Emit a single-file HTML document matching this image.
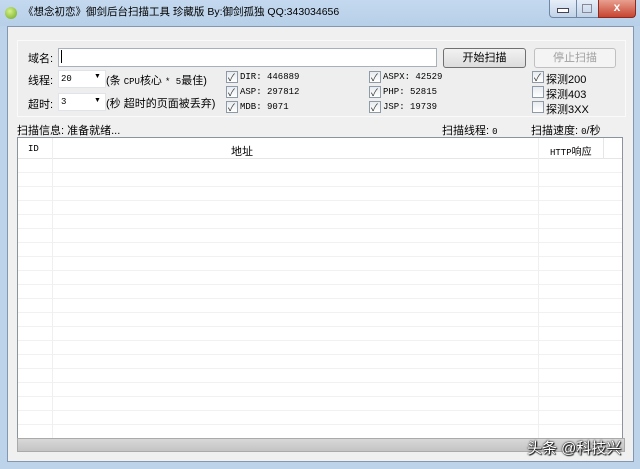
<html><head><style>
body{margin:0;width:640px;height:469px;overflow:hidden;background:#bcd3ea;font-family:"Liberation Sans","Noto Sans CJK SC",sans-serif;font-size:11px;color:#000;position:relative}
.a{position:absolute}
.m{font-family:"Liberation Mono","Noto Sans CJK SC",monospace;font-size:9px}
.cb{position:absolute;width:10px;height:10px;border:1px solid #8e9aa8;background:linear-gradient(#e8ecf0,#fff)}
.cb.c::after{content:"✓";position:absolute;left:1px;top:-3px;font-size:10px;color:#333}
</style></head><body>
<div class="a" style="left:0;top:0;width:640px;height:26px;background:linear-gradient(#c4d9ef,#b7cfe8)"></div>
<div class="a" style="left:5px;top:7px;width:12px;height:12px;border-radius:50%;background:radial-gradient(circle at 40% 35%,#d6f28a,#6aa61e)"></div>
<div class="a" style="left:23px;top:4px;font-size:10.5px">《想念初恋》御剑后台扫描工具 珍藏版 By:御剑孤独 QQ:343034656</div>
<div class="a" style="left:549px;top:0;width:26px;height:17px;border:1px solid #6f86a4;border-top:none;border-radius:0 0 0 4px;background:linear-gradient(#e6eef8,#c2d3e8)"></div>
<div class="a" style="left:557px;top:8px;width:10px;height:3px;border:1px solid #445;background:#fff"></div>
<div class="a" style="left:576px;top:0;width:21px;height:17px;border:1px solid #6f86a4;border-top:none;background:linear-gradient(#e6eef8,#c2d3e8)"></div>
<div class="a" style="left:582px;top:4px;width:8px;height:7px;border:1px solid #889;"></div>
<div class="a" style="left:598px;top:0;width:36px;height:17px;border:1px solid #8a2a20;border-top:none;border-radius:0 0 4px 0;background:linear-gradient(#e8a090,#c84430);color:#fff;text-align:center;font-weight:bold;font-size:12px;line-height:15px">x</div>
<div class="a" style="left:7px;top:26px;width:625px;height:434px;background:#f0f0f0;border:1px solid #8397b0"></div>
<div class="a" style="left:17px;top:40px;width:607px;height:75px;background:#eeeeee;border:1px solid #fafafa"></div>
<div class="a" style="left:28px;top:50px">域名:</div>
<div class="a" style="left:58px;top:48px;width:377px;height:17px;background:#fff;border:1px solid #a8b0bb"></div>
<div class="a" style="left:61px;top:50px;width:1px;height:13px;background:#000"></div>
<div class="a" style="left:443px;top:48px;width:81px;height:18px;border:1px solid #707070;border-radius:3px;background:linear-gradient(#f2f2f2,#dcdcdc);text-align:center;line-height:18px">开始扫描</div>
<div class="a" style="left:534px;top:48px;width:80px;height:18px;border:1px solid #c0c0c0;border-radius:3px;background:#f4f4f4;color:#a0a0a0;text-align:center;line-height:18px">停止扫描</div>
<div class="a" style="left:28px;top:72px">线程:</div>
<div class="a" style="left:58px;top:70px;width:46px;height:16px;background:#fff;border:1px solid #e0e3e8"></div>
<div class="a m" style="left:61px;top:74px">20</div>
<div class="a" style="left:94px;top:73px;font-size:7px">▼</div>
<div class="a" style="left:106px;top:72px">(条 <span class="m">CPU</span>核心 <span class="m">* 5</span>最佳)</div>
<div class="a" style="left:28px;top:96px">超时:</div>
<div class="a" style="left:58px;top:93px;width:46px;height:16px;background:#fff;border:1px solid #e0e3e8"></div>
<div class="a m" style="left:61px;top:97px">3</div>
<div class="a" style="left:94px;top:97px;font-size:7px">▼</div>
<div class="a" style="left:106px;top:95px">(秒 超时的页面被丢弃)</div>
<div class="cb c" style="left:226px;top:71px"></div><div class="a m" style="left:240px;top:72px">DIR: 446889</div>
<div class="cb c" style="left:226px;top:86px"></div><div class="a m" style="left:240px;top:87px">ASP: 297812</div>
<div class="cb c" style="left:226px;top:101px"></div><div class="a m" style="left:240px;top:102px">MDB: 9071</div>
<div class="cb c" style="left:369px;top:71px"></div><div class="a m" style="left:383px;top:72px">ASPX: 42529</div>
<div class="cb c" style="left:369px;top:86px"></div><div class="a m" style="left:383px;top:87px">PHP: 52815</div>
<div class="cb c" style="left:369px;top:101px"></div><div class="a m" style="left:383px;top:102px">JSP: 19739</div>
<div class="cb c" style="left:532px;top:71px"></div><div class="a" style="left:546px;top:71px">探测200</div>
<div class="cb" style="left:532px;top:86px"></div><div class="a" style="left:546px;top:86px">探测403</div>
<div class="cb" style="left:532px;top:101px"></div><div class="a" style="left:546px;top:101px">探测3XX</div>
<div class="a" style="left:17px;top:122px">扫描信息: 准备就绪...</div>
<div class="a" style="left:442px;top:122px">扫描线程: <span class="m">0</span></div>
<div class="a" style="left:531px;top:122px">扫描速度: <span class="m">0</span>/秒</div>
<div class="a" style="left:17px;top:137px;width:604px;height:309px;background:#fff;border:1px solid #8a939e;
background-image:repeating-linear-gradient(#fff 0,#fff 13px,#f1f1f1 13px,#f1f1f1 14px);background-position:0 21px"></div>
<div class="a" style="left:18px;top:138px;width:604px;height:20px;background:#fff;border-bottom:1px solid #e6e6e6"></div>
<div class="a" style="left:52px;top:138px;width:1px;height:306px;background:#efefef"></div>
<div class="a" style="left:538px;top:138px;width:1px;height:306px;background:#efefef"></div>
<div class="a" style="left:603px;top:138px;width:1px;height:20px;background:#e6e6e6"></div>
<div class="a m" style="left:28px;top:144px">ID</div>
<div class="a" style="left:231px;top:143px">地址</div>
<div class="a" style="left:550px;top:143px;font-size:10px"><span class="m">HTTP</span>响应</div>
<div class="a" style="left:17px;top:438px;width:606px;height:12px;background:linear-gradient(#d8d8d8,#c4c4c4);border:1px solid #aaa"></div>
<div class="a" style="left:527px;top:437px;font-size:15px;color:#fff;text-shadow:0 0 2px #222,0 0 1px #000,1px 1px 1px #000">头条 @科技兴</div>
</body></html>
